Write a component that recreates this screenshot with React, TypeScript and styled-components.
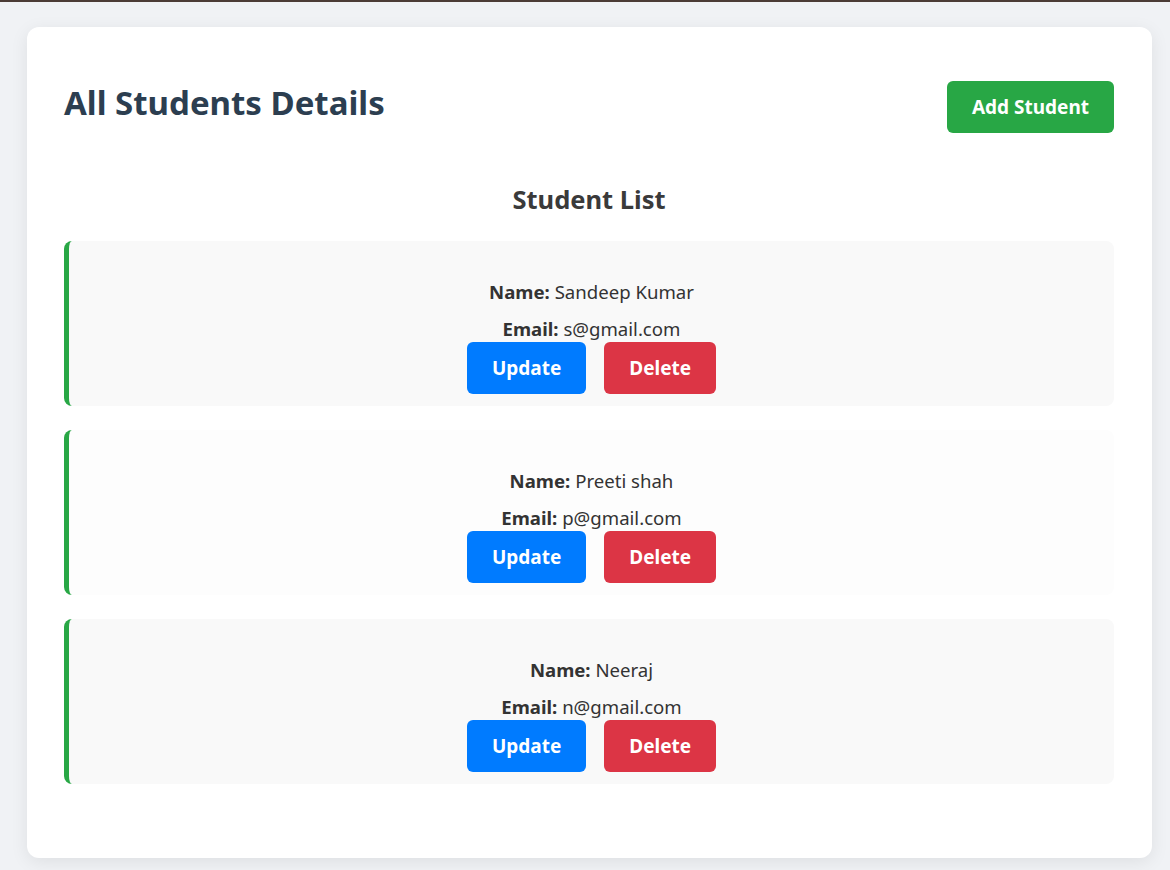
import React from "react";
import styled, { createGlobalStyle } from "styled-components";

const GlobalStyle = createGlobalStyle`
  * { box-sizing: border-box; }
  body {
    margin: 0;
    background: #f0f2f5;
    border-top: 2px solid #4b3b36;
    font-family: "Noto Sans", "Open Sans", sans-serif;
    color: #333;
  }
`;

const Page = styled.div`
  padding: 25px 18px 13px 27px;
`;

const Card = styled.main`
  background: #fff;
  border-radius: 12px;
  box-shadow: 0 4px 18px rgba(0, 0, 0, 0.08);
  padding: 54px 38px 74px 37px;
`;

const Header = styled.header`
  display: flex;
  justify-content: space-between;
  align-items: flex-start;
`;

const Title = styled.h1`
  margin: 0;
  padding-top: 2px;
  font-size: 33px;
  line-height: 40px;
  font-weight: 700;
  color: #2c3e50;
`;

const Button = styled.button<{ $color: string }>`
  background: ${(p) => p.$color};
  color: #fff;
  border: none;
  border-radius: 6px;
  font-family: inherit;
  font-size: 19px;
  font-weight: 700;
  line-height: 24px;
  padding: 14px 25px;
  cursor: pointer;
`;

const ListTitle = styled.h2`
  margin: 50px 0 26px;
  text-align: center;
  font-size: 25.5px;
  line-height: 32px;
  font-weight: 700;
  color: #3a3a3a;
`;

const List = styled.ul`
  list-style: none;
  margin: 0;
  padding: 0;
  display: flex;
  flex-direction: column;
  gap: 24px;
`;

const Item = styled.li<{ $alt: boolean }>`
  background: ${(p) => (p.$alt ? "#fdfdfd" : "#f9f9f9")};
  border-left: 5px solid #28a745;
  border-radius: 8px;
  padding: 37px 20px 12px;
  text-align: center;
`;

const Line = styled.p`
  margin: 0 0 10px;
  font-size: 18.6px;
  line-height: 27px;
  color: #333;
  &:last-of-type { margin-bottom: 0; }
  > b { font-weight: 700; }
`;

const Actions = styled.div`
  display: flex;
  justify-content: center;
  gap: 18px;
`;

const students = [
  { name: "Sandeep Kumar", email: "s@gmail.com" },
  { name: "Preeti shah", email: "p@gmail.com" },
  { name: "Neeraj", email: "n@gmail.com" },
];

export default function App() {
  return (
    <>
      <GlobalStyle />
      <Page>
        <Card>
          <Header>
            <Title>All Students Details</Title>
            <Button $color="#28a745">Add Student</Button>
          </Header>
          <ListTitle>Student List</ListTitle>
          <List>
            {students.map((s, i) => (
              <Item key={s.email} $alt={i % 2 === 1}>
                <Line>
                  <b>Name:</b> {s.name}
                </Line>
                <Line>
                  <b>Email:</b> {s.email}
                </Line>
                <Actions>
                  <Button $color="#007bff">Update</Button>
                  <Button $color="#dc3545">Delete</Button>
                </Actions>
              </Item>
            ))}
          </List>
        </Card>
      </Page>
    </>
  );
}
